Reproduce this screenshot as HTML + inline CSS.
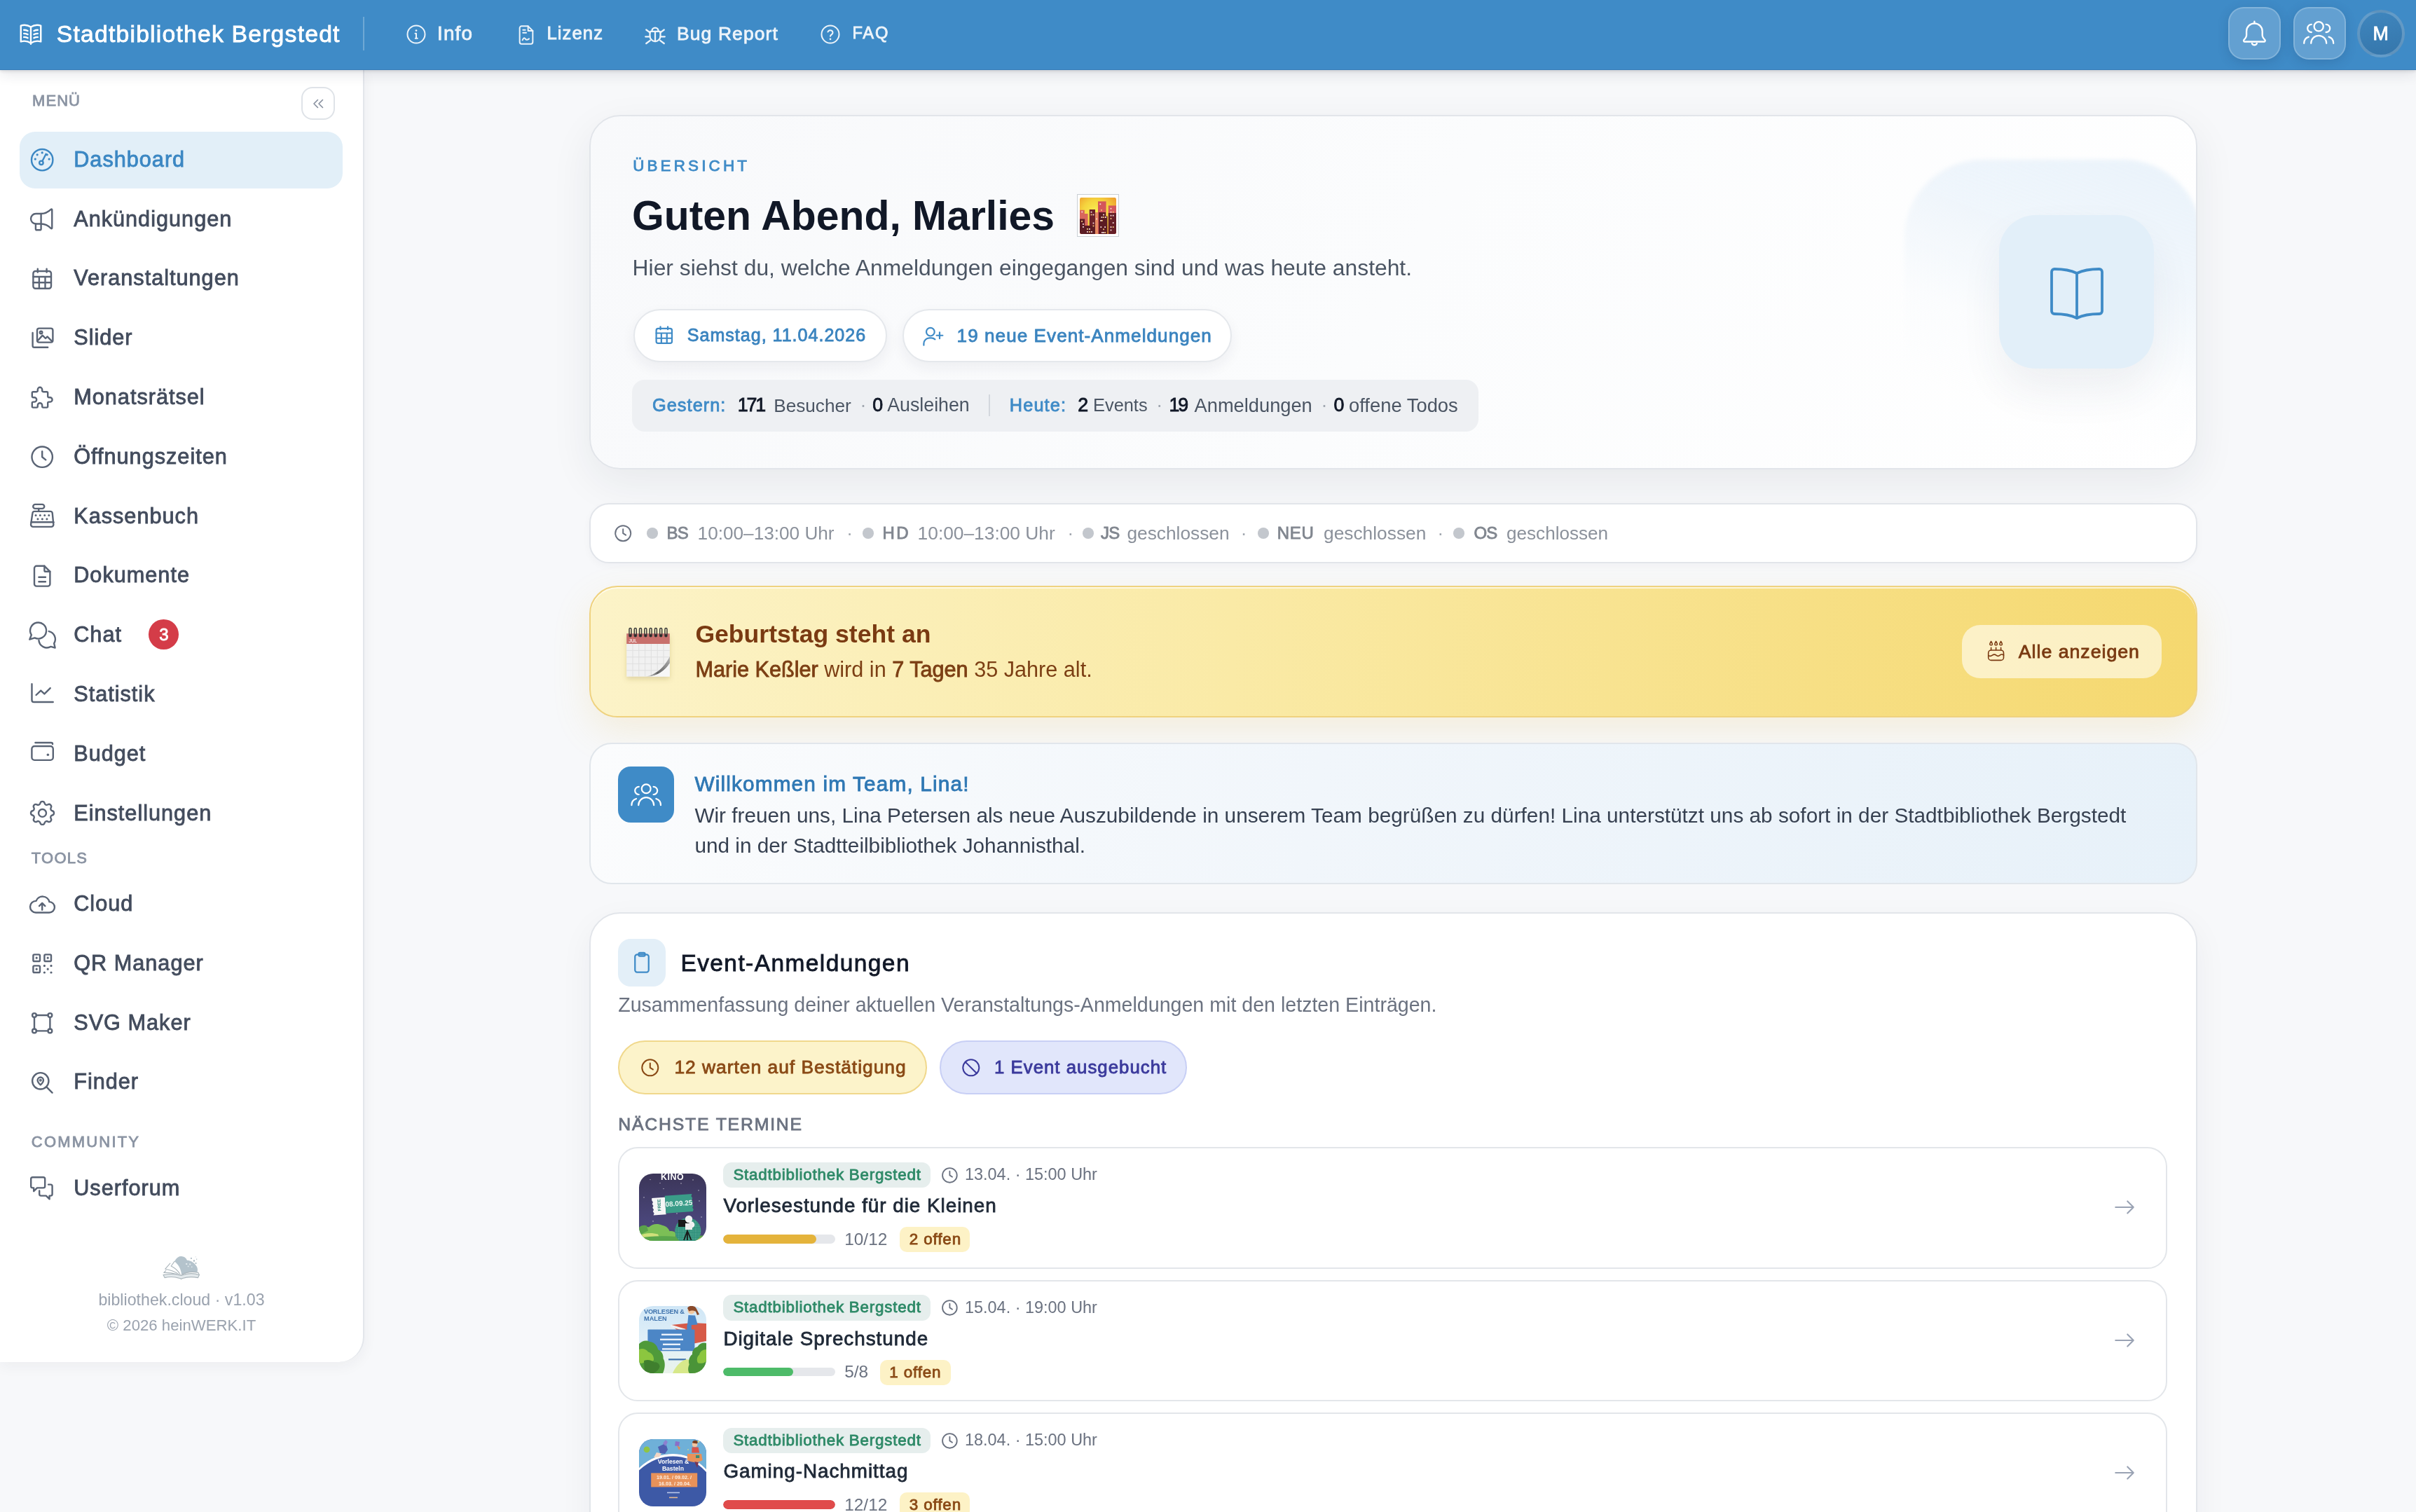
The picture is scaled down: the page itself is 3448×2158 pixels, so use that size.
<!DOCTYPE html>
<html lang="de">
<head>
<meta charset="utf-8">
<title>Dashboard</title>
<style>
html,body{margin:0;padding:0;background:#f7f8fa;overflow:hidden}
#root{zoom:2;width:1724px;height:1079px;position:relative;overflow:hidden;background:#f7f8fa;will-change:transform;font-family:"Liberation Sans",sans-serif}
.t{position:absolute;white-space:nowrap;line-height:1;z-index:6}
svg{position:absolute;overflow:visible;z-index:6}
.ic{fill:none;stroke:currentColor;stroke-linecap:round;stroke-linejoin:round}
.L{position:absolute;box-sizing:border-box}
</style>
</head>
<body>
<div id="root">
<div style="position:absolute;left:0.00px;top:0.00px;width:1724.00px;height:50.00px;background:#3f8bc7;box-shadow:inset 0 -0.5px 0 rgba(20,50,90,.14),0 1px 2px rgba(0,0,0,.10),0 3px 9px rgba(30,40,60,.11);z-index:5"></div>
<svg style="left:12.60px;top:14.70px;width:19.00px;height:19.00px;color:#fff" viewBox="0 0 24 24" class="ic" stroke-width="1.5"><path d="M3 4.8c3-.9 6-.7 9 1.2 3-1.9 6-2.1 9-1.2v14.4c-3-.9-6-.7-9 1.3-3-2-6-2.2-9-1.3z"/><path d="M12 6v15.3"/><path d="M5.8 8.7c1.3 0 2.4.3 3.4.8M5.8 11.9c1.3 0 2.4.3 3.4.8M5.8 15.1c1.3 0 2.4.3 3.4.8M14.8 9.5c1-.5 2.1-.8 3.4-.8M14.8 12.7c1-.5 2.1-.8 3.4-.8M14.8 15.9c1-.5 2.1-.8 3.4-.8"/></svg>
<span class="t" style="left:40.40px;top:16.15px;font-size:16.89px;color:#ffffff;-webkit-text-stroke-width:0.42px;letter-spacing:0.589px;">Stadtbibliothek Bergstedt</span>
<div style="position:absolute;left:259.00px;top:12.00px;width:1.00px;height:24.00px;background:rgba(255,255,255,.25);z-index:6"></div>
<svg style="left:289.30px;top:17.20px;width:15.00px;height:15.00px;color:#edf4fa" viewBox="0 0 24 24" class="ic" stroke-width="1.6"><circle cx="12" cy="12" r="10"/><path d="M12 16.5v-5.5h-1.2M11 16.5h2.4"/><path d="M12 7.6v.01" stroke-width="2.2"/></svg>
<span class="t" style="left:312.00px;top:17.14px;font-size:13.92px;color:#edf4fa;-webkit-text-stroke-width:0.42px;letter-spacing:0.583px;">Info</span>
<svg style="left:367.30px;top:16.40px;width:16.00px;height:17.00px;color:#edf4fa" viewBox="0 0 24 24" class="ic" stroke-width="1.5"><path d="M14 2.5H7a2 2 0 0 0-2 2v15a2 2 0 0 0 2 2h10a2 2 0 0 0 2-2V7.5z"/><path d="M14 2.5v5h5"/><path d="M8.5 6.5h2.5M8.5 9.5h3.5M8 17.5c1-2.5 2-3 3-1.5 1 1.5 2 1.5 4 0"/></svg>
<span class="t" style="left:390.20px;top:17.70px;font-size:12.81px;color:#edf4fa;-webkit-text-stroke-width:0.42px;letter-spacing:0.557px;">Lizenz</span>
<svg style="left:458.60px;top:16.00px;width:18.00px;height:18.00px;color:#edf4fa" viewBox="0 0 24 24" class="ic" stroke-width="1.5"><path d="M9 8.5V8a3 3 0 0 1 6 0v.5"/><path d="M8 8.5h8a1 1 0 0 1 1 1v3.5a5 5 0 0 1-10 0V9.5a1 1 0 0 1 1-1z"/><path d="M12 9v9M2.8 13.5H7M17 13.5h4.2M3.5 7l3.7 2.8M20.5 7l-3.7 2.8M3.5 20l3.7-2.8M20.5 20l-3.7-2.8"/></svg>
<span class="t" style="left:483.00px;top:17.48px;font-size:13.23px;color:#edf4fa;-webkit-text-stroke-width:0.42px;letter-spacing:0.560px;">Bug Report</span>
<svg style="left:585.20px;top:17.20px;width:15.00px;height:15.00px;color:#edf4fa" viewBox="0 0 24 24" class="ic" stroke-width="1.6"><circle cx="12" cy="12" r="10"/><path d="M9.2 9.2a2.9 2.9 0 0 1 5.6 1c0 1.9-2.8 2.3-2.8 4"/><path d="M12 17.4v.01" stroke-width="2.2"/></svg>
<span class="t" style="left:608.20px;top:18.17px;font-size:11.86px;color:#edf4fa;-webkit-text-stroke-width:0.42px;letter-spacing:0.893px;">FAQ</span>
<div style="position:absolute;left:1590.10px;top:5.10px;width:37.60px;height:37.60px;box-sizing:border-box;border-radius:11px;background:rgba(255,255,255,.19);border:1px solid rgba(255,255,255,.2);box-shadow:0 2px 8px rgba(20,50,90,.18);z-index:6"></div>
<div style="position:absolute;left:1636.30px;top:5.10px;width:37.60px;height:37.60px;box-sizing:border-box;border-radius:11px;background:rgba(255,255,255,.19);border:1px solid rgba(255,255,255,.2);box-shadow:0 2px 8px rgba(20,50,90,.18);z-index:6"></div>
<svg style="left:1597.10px;top:11.90px;width:23.40px;height:23.40px;color:#fff" viewBox="0 0 24 24" class="ic" stroke-width="1.2"><path d="M12 3.4v1.4"/><path d="M12 4.8a5.8 5.8 0 0 0-5.8 5.8v2.9c0 1.3-.9 2.4-1.9 3.4a.8.8 0 0 0 .5 1.3h14.4a.8.8 0 0 0 .5-1.3c-1-1-1.9-2.1-1.9-3.4v-2.9A5.8 5.8 0 0 0 12 4.8z"/><path d="M10.2 19.5a2 2 0 0 0 3.6 0"/></svg>
<svg style="left:1643.70px;top:14.90px;width:22.20px;height:16.00px;color:#fff" viewBox="0 0 22.2 16" class="ic" stroke-width="1.15"><circle cx="11.1" cy="3.9" r="3.3"/><path d="M5.6 15.9a5.5 5.5 0 0 1 11 0"/><path d="M5.9 2.4A2.8 2.8 0 0 0 5.9 8M16.3 2.4A2.8 2.8 0 0 1 16.3 8"/><path d="M0.6 15.9a4.8 4.8 0 0 1 3.3-4.6M21.6 15.9a4.8 4.8 0 0 0-3.3-4.6"/></svg>
<div style="position:absolute;left:1682.20px;top:7.20px;width:33.60px;height:33.60px;box-sizing:border-box;border-radius:50%;border:2px solid rgba(255,255,255,.2);background:linear-gradient(170deg,#3f86be,#3576ab);z-index:6"></div>
<span class="t" style="left:1693.30px;top:17.30px;font-size:13.40px;color:#ffffff;-webkit-text-stroke-width:0.42px;">M</span>
<div style="position:absolute;left:0.00px;top:50.00px;width:260.20px;height:922.00px;box-sizing:border-box;background:#fff;border-right:1px solid #e3e6eb;border-bottom-right-radius:18px;box-shadow:0 3px 10px rgba(30,40,60,.05);z-index:2"></div>
<span class="t" style="left:23.00px;top:66.50px;font-size:11.00px;color:#8b94a3;-webkit-text-stroke-width:0.42px;letter-spacing:0.535px;">MENÜ</span>
<div style="position:absolute;left:215.20px;top:62.20px;width:23.60px;height:23.40px;box-sizing:border-box;border:1px solid #dfe3e8;border-radius:8px;background:#fff;z-index:6"></div>
<svg style="left:221.00px;top:67.90px;width:12.00px;height:12.00px;color:#858e9d" viewBox="0 0 24 24" class="ic" stroke-width="1.6"><path d="M11.5 17.5l-5.5-5.5 5.5-5.5M18.5 17.5l-5.5-5.5 5.5-5.5"/></svg>
<div style="position:absolute;left:13.90px;top:94.00px;width:230.80px;height:40.40px;border-radius:11px;background:#e2eff8;z-index:6"></div>
<svg style="left:20.30px;top:104.50px;width:19.20px;height:19.20px;color:#3b87c3" viewBox="0 0 24 24" class="ic" stroke-width="1.5"><circle cx="12" cy="12" r="9.5"/><circle cx="11.2" cy="14.6" r="1.7"/><path d="M12.1 13.1l3.3-6.4"/><path d="M12 5.6h.01M7.6 7.4h.01M16.4 7.4h.01M5.8 11.3h.01M18.2 11.3h.01" stroke-width="2"/></svg>
<span class="t" style="left:52.60px;top:106.42px;font-size:15.35px;color:#3b87c3;-webkit-text-stroke-width:0.42px;letter-spacing:0.492px;">Dashboard</span>
<svg style="left:20.30px;top:146.90px;width:19.20px;height:19.20px;color:#5a6475" viewBox="0 0 24 24" class="ic" stroke-width="1.5"><path d="M11 6.9H6.4A4.5 4.5 0 0 0 6.4 15.9H11C14.5 15.9 17.5 17.5 20 20.1a.5.5 0 0 0 .8-.4V3.3a.5.5 0 0 0-.8-.4C17.5 5.3 14.5 6.9 11 6.9z"/><path d="M11 6.9V20.4a1 1 0 0 1-1 1H7.2a1 1 0 0 1-1-1V15.9"/></svg>
<span class="t" style="left:52.60px;top:148.82px;font-size:15.35px;color:#434c5d;-webkit-text-stroke-width:0.42px;letter-spacing:0.492px;">Ankündigungen</span>
<svg style="left:20.30px;top:189.30px;width:19.20px;height:19.20px;color:#5a6475" viewBox="0 0 24 24" class="ic" stroke-width="1.5"><rect x="4" y="5" width="16" height="15.5" rx="2"/><path d="M8 3v3M16 3v3M4 10h16M4 15.2h16M9.3 10v10.5M14.7 10v10.5"/></svg>
<span class="t" style="left:52.60px;top:191.22px;font-size:15.35px;color:#434c5d;-webkit-text-stroke-width:0.42px;letter-spacing:0.492px;">Veranstaltungen</span>
<svg style="left:20.30px;top:231.70px;width:19.20px;height:19.20px;color:#5a6475" viewBox="0 0 24 24" class="ic" stroke-width="1.5"><rect x="7.5" y="3.5" width="14" height="12.5" rx="1.8"/><circle cx="11" cy="7.2" r="1.1"/><path d="M8.5 14l3.8-4.2 2.7 2.7 1.6-1.6 4 4"/><path d="M3.5 7.5v11.5a1.5 1.5 0 0 0 1.5 1.5h12"/></svg>
<span class="t" style="left:52.60px;top:233.62px;font-size:15.35px;color:#434c5d;-webkit-text-stroke-width:0.42px;letter-spacing:0.492px;">Slider</span>
<svg style="left:20.30px;top:274.10px;width:19.20px;height:19.20px;color:#5a6475" viewBox="0 0 24 24" class="ic" stroke-width="1.5"><path d="M4 7h3a1 1 0 0 0 1-1v-1a2 2 0 0 1 4 0v1a1 1 0 0 0 1 1h3a1 1 0 0 1 1 1v3a1 1 0 0 0 1 1h1a2 2 0 0 1 0 4h-1a1 1 0 0 0-1 1v3a1 1 0 0 1-1 1h-3a1 1 0 0 1-1-1v-1a2 2 0 0 0-4 0v1a1 1 0 0 1-1 1h-3a1 1 0 0 1-1-1v-3a1 1 0 0 1 1-1h1a2 2 0 0 0 0-4h-1a1 1 0 0 1-1-1v-3a1 1 0 0 1 1-1"/></svg>
<span class="t" style="left:52.60px;top:276.02px;font-size:15.35px;color:#434c5d;-webkit-text-stroke-width:0.42px;letter-spacing:0.492px;">Monatsrätsel</span>
<svg style="left:20.30px;top:316.50px;width:19.20px;height:19.20px;color:#5a6475" viewBox="0 0 24 24" class="ic" stroke-width="1.5"><circle cx="12" cy="12" r="9.2"/><path d="M12 7v5l3.2 2.6"/></svg>
<span class="t" style="left:52.60px;top:318.43px;font-size:15.35px;color:#434c5d;-webkit-text-stroke-width:0.42px;letter-spacing:0.492px;">Öffnungszeiten</span>
<svg style="left:20.30px;top:358.90px;width:19.20px;height:19.20px;color:#5a6475" viewBox="0 0 24 24" class="ic" stroke-width="1.5"><rect x="3.9" y="1.2" width="10" height="3.7" rx="1.85"/><path d="M8.9 4.9v2.5"/><path d="M5.2 7.4h14.1a1.8 1.8 0 0 1 1.8 1.6l1 10.1a2 2 0 0 1-2 2.1H3.9a2 2 0 0 1-2-2.1l1.5-10.1a1.8 1.8 0 0 1 1.8-1.6z"/><path d="M2.3 17h19.9"/><path d="M6.3 11h.01M10.2 11h.01M14.2 11h.01M18 11h.01M8.1 14.3h.01M12.1 14.3h.01M16.2 14.3h.01" stroke-width="1.9"/></svg>
<span class="t" style="left:52.60px;top:360.82px;font-size:15.35px;color:#434c5d;-webkit-text-stroke-width:0.42px;letter-spacing:0.492px;">Kassenbuch</span>
<svg style="left:20.30px;top:401.30px;width:19.20px;height:19.20px;color:#5a6475" viewBox="0 0 24 24" class="ic" stroke-width="1.5"><path d="M14 3v4a1 1 0 0 0 1 1h4"/><path d="M17 21H7a2 2 0 0 1-2-2V5a2 2 0 0 1 2-2h7l5 5v11a2 2 0 0 1-2 2z"/><path d="M9 13h6M9 17h6"/></svg>
<span class="t" style="left:52.60px;top:403.22px;font-size:15.35px;color:#434c5d;-webkit-text-stroke-width:0.42px;letter-spacing:0.492px;">Dokumente</span>
<svg style="left:20.30px;top:443.70px;width:19.20px;height:19.20px;color:#5a6475" viewBox="0 0 24 24" class="ic" stroke-width="1.5"><path d="M2.4 12A7.2 7.2 0 1 1 5.3 14.6L0.8 16z"/><path d="M18 8.8A7.2 7.2 0 0 1 22.6 19.6L23.5 23.5 19.8 22.4A7.2 7.2 0 0 1 9 16.8"/></svg>
<span class="t" style="left:52.60px;top:445.62px;font-size:15.35px;color:#434c5d;-webkit-text-stroke-width:0.42px;letter-spacing:0.492px;">Chat</span>
<svg style="left:20.30px;top:486.10px;width:19.20px;height:19.20px;color:#5a6475" viewBox="0 0 24 24" class="ic" stroke-width="1.5"><path d="M2.8 2.7V17a1.8 1.8 0 0 0 1.8 1.8H21.7"/><path d="M6.6 12.5l4.2-4 3.2 3 5.2-5.2"/></svg>
<span class="t" style="left:52.60px;top:488.02px;font-size:15.35px;color:#434c5d;-webkit-text-stroke-width:0.42px;letter-spacing:0.492px;">Statistik</span>
<svg style="left:20.30px;top:528.50px;width:19.20px;height:19.20px;color:#5a6475" viewBox="0 0 24 24" class="ic" stroke-width="1.5"><path d="M5.9 1.9H20a1.3 1.3 0 0 1 1.3 1.3"/><rect x="2.75" y="5" width="19" height="12.4" rx="2.4"/><path d="M17.1 12.6h.01" stroke-width="2.2"/></svg>
<span class="t" style="left:52.60px;top:530.43px;font-size:15.35px;color:#434c5d;-webkit-text-stroke-width:0.42px;letter-spacing:0.492px;">Budget</span>
<svg style="left:20.30px;top:570.90px;width:19.20px;height:19.20px;color:#5a6475" viewBox="0 0 24 24" class="ic" stroke-width="1.5"><g transform="translate(12.2 11.5) scale(1.14) translate(-12 -12)" stroke-width="1.32"><path d="M10.3 4.3c.4-1.8 3-1.8 3.4 0a1.7 1.7 0 0 0 2.6 1.1c1.5-.9 3.3.8 2.4 2.4a1.7 1.7 0 0 0 1 2.5c1.8.4 1.8 3 0 3.4a1.7 1.7 0 0 0-1 2.6c.9 1.5-.8 3.3-2.4 2.4a1.7 1.7 0 0 0-2.6 1c-.4 1.8-3 1.8-3.4 0a1.7 1.7 0 0 0-2.6-1c-1.5.9-3.3-.8-2.4-2.4a1.7 1.7 0 0 0-1-2.6c-1.8-.4-1.8-3 0-3.4a1.7 1.7 0 0 0 1-2.5c-.9-1.5.8-3.3 2.4-2.4 1 .6 2.3.1 2.6-1.1z"/><circle cx="12" cy="12" r="3"/></g></svg>
<span class="t" style="left:52.60px;top:572.83px;font-size:15.35px;color:#434c5d;-webkit-text-stroke-width:0.42px;letter-spacing:0.492px;">Einstellungen</span>
<div style="position:absolute;left:106.10px;top:442.05px;width:21.30px;height:21.30px;border-radius:50%;background:#d43c48;z-index:6"></div>
<span class="t" style="left:113.60px;top:446.90px;font-size:12.00px;color:#fff;-webkit-text-stroke-width:0.42px;">3</span>
<span class="t" style="left:22.40px;top:607.10px;font-size:11.00px;color:#8b94a3;-webkit-text-stroke-width:0.42px;letter-spacing:0.607px;">TOOLS</span>
<svg style="left:20.30px;top:635.60px;width:19.20px;height:19.20px;color:#5a6475" viewBox="0 0 24 24" class="ic" stroke-width="1.5"><path d="M6.3 19.7A5.2 5.2 0 0 1 6.6 9.3A6.2 6.2 0 0 1 18.4 10.1A4.8 4.8 0 0 1 18.2 19.7Z"/><path d="M12 17.3V11.3M9.4 13.8l2.6-2.6 2.6 2.6"/></svg>
<span class="t" style="left:52.60px;top:637.53px;font-size:15.35px;color:#434c5d;-webkit-text-stroke-width:0.42px;letter-spacing:0.492px;">Cloud</span>
<svg style="left:20.30px;top:678.00px;width:19.20px;height:19.20px;color:#5a6475" viewBox="0 0 24 24" class="ic" stroke-width="1.5"><rect x="4" y="4" width="6" height="6" rx="1"/><rect x="4" y="14" width="6" height="6" rx="1"/><rect x="14" y="4" width="6" height="6" rx="1"/><path d="M7 17h.01M7 7h.01M17 7h.01M14 14h.01M17 17h.01M20 14h.01M14 20h.01M20 20h.01" stroke-width="2"/></svg>
<span class="t" style="left:52.60px;top:679.93px;font-size:15.35px;color:#434c5d;-webkit-text-stroke-width:0.42px;letter-spacing:0.492px;">QR Manager</span>
<svg style="left:20.30px;top:720.40px;width:19.20px;height:19.20px;color:#5a6475" viewBox="0 0 24 24" class="ic" stroke-width="1.5"><circle cx="5" cy="5" r="1.8"/><circle cx="19" cy="5" r="1.8"/><circle cx="5" cy="19" r="1.8"/><circle cx="19" cy="19" r="1.8"/><path d="M5 6.8v10.4M19 6.8v10.4M6.8 5h10.4M6.8 19h10.4"/></svg>
<span class="t" style="left:52.60px;top:722.33px;font-size:15.35px;color:#434c5d;-webkit-text-stroke-width:0.42px;letter-spacing:0.492px;">SVG Maker</span>
<svg style="left:20.30px;top:762.80px;width:19.20px;height:19.20px;color:#5a6475" viewBox="0 0 24 24" class="ic" stroke-width="1.5"><circle cx="10.5" cy="10.5" r="7.3"/><path d="M21 21l-5.3-5.3"/><path d="M10.5 14s-2.6-2.4-2.6-4.2a2.6 2.6 0 0 1 5.2 0c0 1.8-2.6 4.2-2.6 4.2z"/><circle cx="10.5" cy="9.8" r=".5"/></svg>
<span class="t" style="left:52.60px;top:764.73px;font-size:15.35px;color:#434c5d;-webkit-text-stroke-width:0.42px;letter-spacing:0.492px;">Finder</span>
<span class="t" style="left:22.40px;top:809.30px;font-size:11.00px;color:#8b94a3;-webkit-text-stroke-width:0.42px;letter-spacing:1.098px;">COMMUNITY</span>
<svg style="left:20.30px;top:838.40px;width:19.20px;height:19.20px;color:#5a6475" viewBox="0 0 24 24" class="ic" stroke-width="1.5"><path d="M14.5 3.5v6.5a1.5 1.5 0 0 1-1.5 1.5H7.5l-3 3v-3h-1A1.5 1.5 0 0 1 2 10V3.5A1.5 1.5 0 0 1 3.5 2H13a1.5 1.5 0 0 1 1.5 1.5z"/><path d="M17.5 8.5h2A1.5 1.5 0 0 1 21 10v7a1.5 1.5 0 0 1-1.5 1.5h-1v3l-3-3H11a1.5 1.5 0 0 1-1.5-1.5v-3"/></svg>
<span class="t" style="left:52.60px;top:840.33px;font-size:15.35px;color:#434c5d;-webkit-text-stroke-width:0.42px;letter-spacing:0.492px;">Userforum</span>
<svg style="left:100px;top:885px;width:60px;height:35px" viewBox="0 0 60 35"><path d="M24.6 15.2C25.5 12.8 27.3 11.5 29.3 11.5C31.3 11.5 32.7 12.6 33.5 14.4C36.8 14.6 39 16.5 40.5 19C41.2 20.5 41.1 22 40.6 23C37 22.4 33 23 29.6 24.7C29 20.5 27.3 17.2 24.6 15.2z" fill="#b4c3cc"/><g fill="#e4ebef"><rect x="32.6" y="16.5" width="1" height="1"/><rect x="35.1" y="16.7" width="1" height="1"/><rect x="33.9" y="18.3" width=".8" height=".8"/><rect x="36.5" y="18.8" width=".7" height=".7"/></g><g fill="#a9b8c1"><rect x="36" y="12.5" width=".9" height=".9"/><rect x="37.9" y="14.2" width="1.1" height="1.1"/><rect x="39.3" y="16" width=".9" height=".9"/><rect x="40" y="13.3" width=".6" height=".6"/><rect x="39.3" y="11.7" width=".5" height=".5" opacity=".6"/></g><g fill="none" stroke="#aab5bb" stroke-width=".55" stroke-linejoin="round" stroke-linecap="round"><path d="M22.1 18.5L24.6 15.1M22.1 18.5C25 20 27.3 22 28.6 24.6"/><path d="M17.9 20.6L21.4 16.6M17.9 20.6C21.5 21.2 24.8 22.4 27.3 24.2"/><path d="M16.9 23.2L18.4 21.7M16.9 23.2C20 23.1 23.2 23.5 26.1 24.3"/><path d="M29.6 24.7C32.5 23 37 22.2 41.5 23.2L42.2 24.8"/></g><path d="M16.5 24.8C21 24 26 24.2 29.3 25.3C32.5 24 37.5 23.2 42.2 24.8L41.3 26.8C37 26 33 26.3 30.3 27.3L29.3 27.8L28.4 27.3C25.5 26.3 21 26 17.5 26.8z" fill="#e3e9ec" stroke="#aab5bb" stroke-width=".55" stroke-linejoin="round"/></svg>
<span class="t" style="left:0;width:259px;text-align:center;top:922.23px;font-size:11.6px;color:#9aa2ae">bibliothek.cloud · v1.03</span>
<span class="t" style="left:0;width:259px;text-align:center;top:940.28px;font-size:11.1px;color:#9aa2ae">© 2026 heinWERK.IT</span>
<div class="L" style="left:420.4px;top:82px;width:1147.4px;height:253px;border:1px solid #e2e5ea;border-radius:22px;background:linear-gradient(120deg,#f8f9fb 0%,#fbfcfd 50%,#ffffff 100%);box-shadow:0 10px 30px rgba(30,40,60,.07);overflow:hidden;z-index:3">
  <div style="position:absolute;left:937.8px;top:30.8px;width:212px;height:215px;border-radius:56px;background:linear-gradient(200deg,rgba(221,235,248,.64) 0%,rgba(226,238,249,.5) 32%,rgba(240,246,252,.16) 58%,rgba(255,255,255,0) 78%);filter:blur(1.5px)"></div>
</div>
<span class="t" style="left:451.60px;top:113.00px;font-size:11.20px;color:#3f8bc7;-webkit-text-stroke-width:0.42px;letter-spacing:2.083px;">ÜBERSICHT</span>
<span class="t" style="left:451.00px;top:139.48px;font-size:29.44px;color:#111827;font-weight:700;">Guten Abend, Marlies</span>
<div class="L" style="left:768.3px;top:138.7px;width:30.2px;height:30.2px;border:.5px solid #c9cfd4;background:#fff;overflow:hidden;z-index:6">
<svg style="left:1.6px;top:1.6px;width:26px;height:26px" viewBox="0 0 26 26"><defs><radialGradient id="sk" cx=".45" cy=".45" r=".7"><stop offset="0" stop-color="#f8f256"/><stop offset=".55" stop-color="#f5d43e"/><stop offset="1" stop-color="#ee9a2c"/></radialGradient><clipPath id="ec"><rect width="26" height="26" rx="1.2"/></clipPath></defs><g clip-path="url(#ec)"><rect width="26" height="26" fill="url(#sk)"/><path d="M0 8.9h3.4v2.6h2.4V26H0z" fill="#d9675c"/><rect x="11" y="10.5" width="2.2" height="15.5" fill="#e58b62"/><rect x="13" y="2.7" width="5.8" height="23.3" fill="#d4565a"/><rect x="20.4" y="5.7" width="5.6" height="20.3" fill="#d4585c"/><rect x="6.9" y="8.5" width="4.1" height="17.5" fill="#6a2129"/><path d="M0 15.3h3.6V20h3.4v6H0z" fill="#5c1c24"/><rect x="3.6" y="20" width="7.3" height="6" fill="#5a1b23"/><path d="M13.5 10.5h5v2.7h1.2V26h-6.2z" fill="#5b1b23"/><rect x="20.4" y="11" width="5.6" height="15" fill="#661f27"/><rect x="1.2" y="9.8" width=".9" height=".9" fill="#f7dede"/><rect x="1.1" y="16.5" width=".9" height=".9" fill="#f3c97a"/><rect x="2.0" y="18.5" width=".9" height=".9" fill="#f7dede"/><rect x="2.0" y="20.5" width=".9" height=".9" fill="#f7dede"/><rect x="5.0" y="22.0" width=".9" height=".9" fill="#f3c97a"/><rect x="6.5" y="22.0" width=".9" height=".9" fill="#f7dede"/><rect x="5.0" y="24.0" width=".9" height=".9" fill="#f7dede"/><rect x="6.5" y="24.0" width=".9" height=".9" fill="#f3c97a"/><rect x="8.0" y="24.0" width=".9" height=".9" fill="#f7dede"/><rect x="7.8" y="9.9" width=".9" height=".9" fill="#f7dede"/><rect x="7.8" y="11.8" width=".9" height=".9" fill="#f3c97a"/><rect x="9.3" y="11.8" width=".9" height=".9" fill="#f7dede"/><rect x="9.3" y="17.8" width=".9" height=".9" fill="#f7dede"/><rect x="9.3" y="19.8" width=".9" height=".9" fill="#f3c97a"/><rect x="11.6" y="14.8" width=".9" height=".9" fill="#f7dede"/><rect x="14.2" y="4.2" width=".9" height=".9" fill="#f7dede"/><rect x="15.0" y="8.5" width=".9" height=".9" fill="#f3c97a"/><rect x="16.6" y="11.8" width=".9" height=".9" fill="#f7dede"/><rect x="15.3" y="13.6" width=".9" height=".9" fill="#f7dede"/><rect x="16.6" y="13.6" width=".9" height=".9" fill="#f3c97a"/><rect x="18.0" y="13.6" width=".9" height=".9" fill="#f7dede"/><rect x="14.6" y="16.0" width=".9" height=".9" fill="#f7dede"/><rect x="15.5" y="16.0" width=".9" height=".9" fill="#f3c97a"/><rect x="14.7" y="20.6" width=".9" height=".9" fill="#f7dede"/><rect x="17.6" y="20.6" width=".9" height=".9" fill="#f7dede"/><rect x="16.6" y="22.2" width=".9" height=".9" fill="#f3c97a"/><rect x="15.5" y="24.5" width=".9" height=".9" fill="#f7dede"/><rect x="16.6" y="24.5" width=".9" height=".9" fill="#f7dede"/><rect x="17.7" y="24.5" width=".9" height=".9" fill="#f3c97a"/><rect x="21.8" y="7.4" width=".9" height=".9" fill="#f7dede"/><rect x="21.8" y="9.9" width=".9" height=".9" fill="#f7dede"/><rect x="23.4" y="9.9" width=".9" height=".9" fill="#f3c97a"/><rect x="21.8" y="12.4" width=".9" height=".9" fill="#f7dede"/><rect x="23.4" y="12.4" width=".9" height=".9" fill="#f7dede"/><rect x="21.8" y="14.6" width=".9" height=".9" fill="#f3c97a"/><rect x="23.4" y="17.6" width=".9" height=".9" fill="#f7dede"/><rect x="21.8" y="20.6" width=".9" height=".9" fill="#f7dede"/><rect x="23.4" y="20.6" width=".9" height=".9" fill="#f3c97a"/><rect x="21.8" y="22.8" width=".9" height=".9" fill="#f7dede"/></g></svg></div>
<span class="t" style="left:451.30px;top:183.74px;font-size:15.91px;color:#4b5563;">Hier siehst du, welche Anmeldungen eingegangen sind und was heute ansteht.</span>
<div style="position:absolute;left:451.90px;top:220.30px;width:181.10px;height:38.20px;box-sizing:border-box;border:1px solid #e5e8ec;border-radius:19px;background:#fff;z-index:6;box-shadow:0 4px 10px rgba(30,40,60,.06);"></div>
<svg style="left:466.10px;top:231.60px;width:15.80px;height:15.80px;color:#3f8bc7" viewBox="0 0 24 24" class="ic" stroke-width="1.7"><rect x="3.5" y="4.5" width="17" height="16" rx="2"/><path d="M8 2.5v3M16 2.5v3M3.5 9.5h17M3.5 15h17M9 9.5v11M15 9.5v11"/></svg>
<span class="t" style="left:490.40px;top:233.13px;font-size:12.54px;color:#3b84bf;-webkit-text-stroke-width:0.42px;letter-spacing:0.495px;">Samstag, 11.04.2026</span>
<div style="position:absolute;left:644.10px;top:220.30px;width:235.00px;height:38.20px;box-sizing:border-box;border:1px solid #e5e8ec;border-radius:19px;background:#fff;z-index:6;box-shadow:0 4px 10px rgba(30,40,60,.06);"></div>
<svg style="left:656.80px;top:231.00px;width:17.50px;height:17.50px;color:#3f8bc7" viewBox="0 0 24 24" class="ic" stroke-width="1.5"><circle cx="9.5" cy="8" r="4"/><path d="M3 21v-1.5A5.5 5.5 0 0 1 8.5 14h2a5.5 5.5 0 0 1 3.5 1.3"/><path d="M18.5 8.5v6M15.5 11.5h6"/></svg>
<span class="t" style="left:682.80px;top:232.88px;font-size:13.04px;color:#3b84bf;-webkit-text-stroke-width:0.42px;letter-spacing:0.530px;">19 neue Event-Anmeldungen</span>
<div style="position:absolute;left:451.00px;top:271.00px;width:604.00px;height:36.90px;border-radius:9px;background:#eef0f3;z-index:6"></div>
<span class="t" style="left:465.50px;top:282.97px;font-size:12.66px;color:#3f8bc7;-webkit-text-stroke-width:0.42px;letter-spacing:0.522px;">Gestern:</span>
<span class="t" style="left:526.40px;top:282.60px;font-size:13.40px;color:#111827;-webkit-text-stroke-width:0.42px;letter-spacing:-1.089px;">171</span>
<span class="t" style="left:552.10px;top:282.76px;font-size:13.09px;color:#4b5563;">Besucher</span>
<span class="t" style="left:613.80px;top:282.60px;font-size:13.40px;color:#a1a7b0;">·</span>
<span class="t" style="left:622.60px;top:282.60px;font-size:13.40px;color:#111827;-webkit-text-stroke-width:0.42px;">0</span>
<span class="t" style="left:633.10px;top:282.60px;font-size:13.39px;color:#4b5563;">Ausleihen</span>
<div style="position:absolute;left:705.60px;top:281.50px;width:1.00px;height:15.50px;background:#d3d7dd;z-index:6"></div>
<span class="t" style="left:720.40px;top:282.97px;font-size:12.66px;color:#3f8bc7;-webkit-text-stroke-width:0.42px;letter-spacing:0.561px;">Heute:</span>
<span class="t" style="left:769.10px;top:282.60px;font-size:13.40px;color:#111827;-webkit-text-stroke-width:0.42px;">2</span>
<span class="t" style="left:780.00px;top:282.95px;font-size:12.70px;color:#4b5563;">Events</span>
<span class="t" style="left:825.10px;top:282.60px;font-size:13.40px;color:#a1a7b0;">·</span>
<span class="t" style="left:834.30px;top:282.60px;font-size:13.40px;color:#111827;-webkit-text-stroke-width:0.42px;letter-spacing:-1.174px;">19</span>
<span class="t" style="left:852.30px;top:282.48px;font-size:13.63px;color:#4b5563;">Anmeldungen</span>
<span class="t" style="left:942.70px;top:282.60px;font-size:13.40px;color:#a1a7b0;">·</span>
<span class="t" style="left:951.70px;top:282.60px;font-size:13.40px;color:#111827;-webkit-text-stroke-width:0.42px;">0</span>
<span class="t" style="left:962.50px;top:282.45px;font-size:13.69px;color:#4b5563;">offene Todos</span>
<div style="position:absolute;left:1426.70px;top:153.50px;width:110.30px;height:109.70px;border-radius:26px;background:#e2eff9;box-shadow:0 16px 30px rgba(40,60,90,.07);z-index:6"></div>
<svg style="left:1457.80px;top:185.10px;width:48.00px;height:48.00px;color:#3f8bc7" viewBox="0 0 24 24" class="ic" stroke-width="0.95"><path d="M12 5C10 4 7 3.5 4 3.5a1 1 0 0 0-1 1V18.5a1 1 0 0 0 1 1C7 19.5 10 20 12 21C14 20 17 19.5 20 19.5a1 1 0 0 0 1-1V4.5a1 1 0 0 0-1-1C17 3.5 14 4 12 5z"/><path d="M12 5V21"/></svg>
<div style="position:absolute;left:420.40px;top:359.00px;width:1147.40px;height:43.00px;box-sizing:border-box;border:1px solid #e2e5ea;border-radius:14px;background:#fff;box-shadow:0 2px 6px rgba(30,40,60,.03);z-index:3"></div>
<svg style="left:438.20px;top:373.90px;width:13.20px;height:13.20px;color:#6b7280" viewBox="0 0 24 24" class="ic" stroke-width="1.8"><circle cx="12" cy="12" r="10"/><path d="M12 6.5v5.5l3.5 2.2"/></svg>
<div style="position:absolute;left:461.50px;top:376.40px;width:7.90px;height:7.90px;border-radius:50%;background:#c3c7cd;z-index:6"></div>
<span class="t" style="left:475.80px;top:374.40px;font-size:12.00px;color:#80868f;-webkit-text-stroke-width:0.42px;letter-spacing:-0.400px;">BS</span>
<span class="t" style="left:497.80px;top:373.86px;font-size:13.09px;color:#8b919b;">10:00–13:00 Uhr</span>
<span class="t" style="left:604.10px;top:373.90px;font-size:13.00px;color:#a0a6ae;">·</span>
<div style="position:absolute;left:615.50px;top:376.40px;width:7.90px;height:7.90px;border-radius:50%;background:#c3c7cd;z-index:6"></div>
<span class="t" style="left:629.70px;top:374.40px;font-size:12.00px;color:#80868f;-webkit-text-stroke-width:0.42px;letter-spacing:1.260px;">HD</span>
<span class="t" style="left:654.80px;top:373.82px;font-size:13.17px;color:#8b919b;">10:00–13:00 Uhr</span>
<span class="t" style="left:761.70px;top:373.90px;font-size:13.00px;color:#a0a6ae;">·</span>
<div style="position:absolute;left:772.70px;top:376.40px;width:7.90px;height:7.90px;border-radius:50%;background:#c3c7cd;z-index:6"></div>
<span class="t" style="left:785.50px;top:374.40px;font-size:12.00px;color:#80868f;-webkit-text-stroke-width:0.42px;letter-spacing:-0.400px;">JS</span>
<span class="t" style="left:804.20px;top:373.83px;font-size:13.15px;color:#8b919b;">geschlossen</span>
<span class="t" style="left:885.40px;top:373.90px;font-size:13.00px;color:#a0a6ae;">·</span>
<div style="position:absolute;left:897.40px;top:376.40px;width:7.90px;height:7.90px;border-radius:50%;background:#c3c7cd;z-index:6"></div>
<span class="t" style="left:911.40px;top:374.40px;font-size:12.00px;color:#80868f;-webkit-text-stroke-width:0.42px;letter-spacing:0.340px;">NEU</span>
<span class="t" style="left:944.50px;top:373.82px;font-size:13.17px;color:#8b919b;">geschlossen</span>
<span class="t" style="left:1025.80px;top:373.90px;font-size:13.00px;color:#a0a6ae;">·</span>
<div style="position:absolute;left:1037.00px;top:376.40px;width:7.90px;height:7.90px;border-radius:50%;background:#c3c7cd;z-index:6"></div>
<span class="t" style="left:1051.70px;top:374.40px;font-size:12.00px;color:#80868f;-webkit-text-stroke-width:0.42px;letter-spacing:-0.400px;">OS</span>
<span class="t" style="left:1075.00px;top:373.87px;font-size:13.06px;color:#8b919b;">geschlossen</span>
<div style="position:absolute;left:420.40px;top:418.00px;width:1147.40px;height:94.00px;box-sizing:border-box;border:1px solid #efd27f;border-radius:20px;background:linear-gradient(90deg,#fcf3c8 0%,#faeaa6 40%,#f5d86f 100%);box-shadow:inset 0 1px 0 rgba(255,255,255,.65),0 10px 26px rgba(230,190,80,.17);z-index:3"></div>
<svg style="left:440px;top:440px;width:40px;height:46px" viewBox="0 0 40 46"><defs><filter id="csh" x="-30%" y="-30%" width="160%" height="170%"><feDropShadow dx="0" dy="1.8" stdDeviation="1.8" flood-color="#7a6420" flood-opacity=".22"/></filter><linearGradient id="curl" x1="0" y1="1" x2="1" y2="0"><stop offset="0" stop-color="#5a5a5a" stop-opacity=".0"/><stop offset=".35" stop-color="#4a4a4a" stop-opacity=".85"/><stop offset="1" stop-color="#8a8a8a" stop-opacity=".6"/></linearGradient></defs><g filter="url(#csh)"><rect x="7.1" y="12.1" width="30.8" height="30.7" fill="#f1f1f1"/><rect x="7.1" y="12.1" width="30.8" height="7.4" fill="#c8706c"/></g><g stroke="#dedede" stroke-width=".45"><path d="M11.50 19.5V42.8"/><path d="M15.90 19.5V42.8"/><path d="M20.30 19.5V42.8"/><path d="M24.70 19.5V42.8"/><path d="M29.10 19.5V42.8"/><path d="M33.50 19.5V42.8"/><path d="M7.1 24.20H37.9"/><path d="M7.1 28.90H37.9"/><path d="M7.1 33.70H37.9"/><path d="M7.1 38.40H37.9"/></g><text x="8.6" y="18.7" font-size="3.2" font-weight="700" fill="#f4e0df" font-family="Liberation Sans">JUL</text><path d="M19.5 42.8C27 42.6 34 36.5 37.9 28.5V33.2C34.6 38.6 29 42.2 23 42.8z" fill="url(#curl)"/><path d="M23 42.8C29 42.2 34.6 38.6 37.9 33.2V42.8z" fill="#f7f7f7"/><rect x="9.00" y="8.2" width="1.5" height="6.2" rx=".75" fill="none" stroke="#3a3a3a" stroke-width=".75"/><rect x="9.10" y="12.6" width="1.3" height="1.6" rx=".5" fill="#2a2a2a"/><rect x="12.64" y="8.2" width="1.5" height="6.2" rx=".75" fill="none" stroke="#3a3a3a" stroke-width=".75"/><rect x="12.74" y="12.6" width="1.3" height="1.6" rx=".5" fill="#2a2a2a"/><rect x="16.28" y="8.2" width="1.5" height="6.2" rx=".75" fill="none" stroke="#3a3a3a" stroke-width=".75"/><rect x="16.38" y="12.6" width="1.3" height="1.6" rx=".5" fill="#2a2a2a"/><rect x="19.92" y="8.2" width="1.5" height="6.2" rx=".75" fill="none" stroke="#3a3a3a" stroke-width=".75"/><rect x="20.02" y="12.6" width="1.3" height="1.6" rx=".5" fill="#2a2a2a"/><rect x="23.56" y="8.2" width="1.5" height="6.2" rx=".75" fill="none" stroke="#3a3a3a" stroke-width=".75"/><rect x="23.66" y="12.6" width="1.3" height="1.6" rx=".5" fill="#2a2a2a"/><rect x="27.20" y="8.2" width="1.5" height="6.2" rx=".75" fill="none" stroke="#3a3a3a" stroke-width=".75"/><rect x="27.30" y="12.6" width="1.3" height="1.6" rx=".5" fill="#2a2a2a"/><rect x="30.84" y="8.2" width="1.5" height="6.2" rx=".75" fill="none" stroke="#3a3a3a" stroke-width=".75"/><rect x="30.94" y="12.6" width="1.3" height="1.6" rx=".5" fill="#2a2a2a"/><rect x="34.48" y="8.2" width="1.5" height="6.2" rx=".75" fill="none" stroke="#3a3a3a" stroke-width=".75"/><rect x="34.58" y="12.6" width="1.3" height="1.6" rx=".5" fill="#2a2a2a"/></svg>
<span class="t" style="left:496.20px;top:443.81px;font-size:17.79px;color:#7a3a12;font-weight:700;">Geburtstag steht an</span>
<span class="t" style="left:496.2px;top:469.92px;font-size:15.32px;color:#7c3f14"><span style="-webkit-text-stroke-width:0.42px">Marie Keßler</span> wird in <span style="-webkit-text-stroke-width:0.42px">7 Tagen</span> 35 Jahre alt.</span>
<div style="position:absolute;left:1400.00px;top:446.00px;width:142.70px;height:37.80px;border-radius:13px;background:rgba(255,253,245,.62);z-index:6"></div>
<svg style="left:1416.00px;top:455.00px;width:14.00px;height:18.00px;color:#7a3a12" viewBox="0 0 14 18" class="ic" stroke-width="0.8"><rect x="2.85" y="9" width="10.9" height="7.2" rx="2"/><path d="M2.9 12.8c.9.5 1.9.5 2.8-.2s1.9-.7 2.7 0 1.9.7 2.7 0 1.9-.7 2.7 0"/><path d="M4.8 7.2v1.6M8.3 7.2v1.6M11.8 7.2v1.6"/><path d="M4.80 2.7C5.30 3.6 5.85 4.3 5.70 4.9A1.05 1.05 0 0 1 3.90 4.9C3.75 4.3 4.30 3.6 4.80 2.7z"/><path d="M8.30 2.7C8.80 3.6 9.35 4.3 9.20 4.9A1.05 1.05 0 0 1 7.40 4.9C7.25 4.3 7.80 3.6 8.30 2.7z"/><path d="M11.80 2.7C12.30 3.6 12.85 4.3 12.70 4.9A1.05 1.05 0 0 1 10.90 4.9C10.75 4.3 11.30 3.6 11.80 2.7z"/></svg>
<span class="t" style="left:1440.40px;top:458.43px;font-size:13.33px;color:#7a3a12;-webkit-text-stroke-width:0.42px;letter-spacing:0.502px;">Alle anzeigen</span>
<div style="position:absolute;left:420.40px;top:530.00px;width:1147.40px;height:101.00px;box-sizing:border-box;border:1px solid #e1e6eb;border-radius:16px;background:linear-gradient(100deg,#fbfcfd 0%,#f1f6fb 45%,#e7f1f9 100%);z-index:3"></div>
<div style="position:absolute;left:441.00px;top:547.00px;width:40.00px;height:40.00px;border-radius:9px;background:#3f8bc7;z-index:6"></div>
<svg style="left:450.00px;top:559.20px;width:22.20px;height:16.00px;color:#fff" viewBox="0 0 22.2 16" class="ic" stroke-width="1.1"><circle cx="11.1" cy="3.9" r="3.2"/><path d="M5.6 15.6a5.5 5.5 0 0 1 11 0"/><path d="M5.9 2.4A2.8 2.8 0 0 0 5.9 8M16.3 2.4A2.8 2.8 0 0 1 16.3 8"/><path d="M0.7 15.6a4.8 4.8 0 0 1 3.3-4.6M21.5 15.6a4.8 4.8 0 0 0-3.3-4.6"/></svg>
<span class="t" style="left:495.70px;top:551.75px;font-size:14.90px;color:#2f78b4;-webkit-text-stroke-width:0.42px;letter-spacing:0.571px;">Willkommen im Team, Lina!</span>
<span class="t" style="left:495.70px;top:574.55px;font-size:14.89px;color:#374151;">Wir freuen uns, Lina Petersen als neue Auszubildende in unserem Team begrüßen zu dürfen! Lina unterstützt uns ab sofort in der Stadtbibliothek Bergstedt</span>
<span class="t" style="left:495.70px;top:596.15px;font-size:14.89px;color:#374151;">und in der Stadtteilbibliothek Johannisthal.</span>
<div style="position:absolute;left:420.40px;top:651.00px;width:1147.40px;height:470.00px;box-sizing:border-box;border:1px solid #e2e5ea;border-radius:22px;background:#fff;box-shadow:0 8px 24px rgba(30,40,60,.05);z-index:3"></div>
<div style="position:absolute;left:441.00px;top:670.00px;width:33.80px;height:33.80px;border-radius:9px;background:#e3eff8;z-index:6"></div>
<svg style="left:448.90px;top:677.90px;width:18.00px;height:18.00px;color:#3f8bc7" viewBox="0 0 24 24" class="ic" stroke-width="1.5"><rect x="5.5" y="4.2" width="13" height="16.8" rx="2"/><rect x="9" y="2.6" width="6" height="3.2" rx="1.1"/></svg>
<span class="t" style="left:485.70px;top:678.83px;font-size:16.74px;color:#111827;-webkit-text-stroke-width:0.42px;letter-spacing:0.714px;">Event-Anmeldungen</span>
<span class="t" style="left:441.10px;top:710.15px;font-size:14.30px;color:#6b7280;">Zusammenfassung deiner aktuellen Veranstaltungs-Anmeldungen mit den letzten Einträgen.</span>
<div style="position:absolute;left:441.10px;top:742.40px;width:220.40px;height:38.50px;box-sizing:border-box;border-radius:20px;border:1px solid #f0d88c;background:#fcf3ca;z-index:6"></div>
<svg style="left:456.80px;top:755.00px;width:13.80px;height:13.80px;color:#8a4a16" viewBox="0 0 24 24" class="ic" stroke-width="1.8"><circle cx="12" cy="12" r="10"/><path d="M12 6.5v5.5l3.5 2.2"/></svg>
<span class="t" style="left:481.20px;top:755.09px;font-size:13.22px;color:#8a4a16;-webkit-text-stroke-width:0.42px;letter-spacing:0.482px;">12 warten auf Bestätigung</span>
<div style="position:absolute;left:670.30px;top:742.40px;width:176.70px;height:38.50px;box-sizing:border-box;border-radius:20px;border:1px solid #c8cff5;background:#e1e6fb;z-index:6"></div>
<svg style="left:685.80px;top:755.00px;width:13.80px;height:13.80px;color:#3b3a9c" viewBox="0 0 24 24" class="ic" stroke-width="1.8"><circle cx="12" cy="12" r="10"/><path d="M4.9 4.9l14.2 14.2"/></svg>
<span class="t" style="left:709.50px;top:755.25px;font-size:12.90px;color:#3b3a9c;-webkit-text-stroke-width:0.42px;letter-spacing:0.505px;">1 Event ausgebucht</span>
<span class="t" style="left:441.10px;top:796.60px;font-size:12.40px;color:#6b7280;-webkit-text-stroke-width:0.42px;letter-spacing:0.907px;">NÄCHSTE TERMINE</span>
<div style="position:absolute;left:441.10px;top:818.50px;width:1105.60px;height:86.75px;box-sizing:border-box;border:1px solid #e3e6ea;border-radius:14px;background:#fff;z-index:4"></div>
<div style="position:absolute;left:456px;top:837.5px;width:48px;height:48px;border-radius:10px;overflow:hidden;z-index:6"><svg style="left:0;top:0;width:48px;height:48px" viewBox="0 0 48 48"><defs><linearGradient id="t1" x1="0" y1="0" x2="0" y2="1"><stop offset="0" stop-color="#3b3558"/><stop offset=".7" stop-color="#4a467a"/><stop offset="1" stop-color="#4c4a78"/></linearGradient><pattern id="dots" width="1.2" height="1.2" patternUnits="userSpaceOnUse"><circle cx=".6" cy=".6" r=".3" fill="#9fe0c8" opacity=".6"/></pattern></defs><rect width="48" height="48" fill="url(#t1)"/><g fill="#fff" opacity=".75"><circle cx="8" cy="4.3" r=".35"/><circle cx="15" cy="6.8" r=".35"/><circle cx="30" cy="7" r=".35"/><circle cx="38.5" cy="4.5" r=".35"/><circle cx="42.5" cy="12" r=".35"/><circle cx="3.5" cy="17" r=".35"/><circle cx="17.5" cy="10.8" r=".35"/><circle cx="43" cy="19.5" r=".35"/><circle cx="10" cy="34" r=".35"/><circle cx="44.5" cy="31" r=".35"/><circle cx="27" cy="28.5" r=".35"/></g><text x="23.8" y="4.4" font-size="6.2" font-weight="700" fill="#fff" text-anchor="middle" font-family="Liberation Sans" letter-spacing=".3">KINO</text><g transform="rotate(-4 24 22)"><path d="M9.5 16.5h9.3v12.3H9.8l.6-1.5-.8-1.2.7-1.3-.8-1.4.7-1.3-.8-1.4.7-1.2-.8-1.5z" fill="#f6f6f6"/><path d="M18.8 15.5h19.4l-.6 1.6.8 1.4-.7 1.3.8 1.4-.7 1.3.8 1.4-.7 1.3.7 1.5-.6 1.3H18.8z" fill="#3a9c88"/><text x="28.5" y="23.3" font-size="5" font-weight="700" fill="#eaf7f2" text-anchor="middle" font-family="Liberation Sans">08.09.25</text><text x="15.5" y="26" font-size="3.2" font-weight="700" fill="#2f8a78" font-family="Liberation Sans" transform="rotate(-90 15.5 26)">FREE</text></g><path d="M0 40.5c1.8-2.2 4.2-3.2 7-2.2 2-2.3 6-3.2 9.5-1.4 2.8.5 4.5 2.2 5.3 4.2 1.8-.3 3.5.2 4.5 1.5L26 48H0z" fill="#7cbf56"/><path d="M0 38.5c1.5-1.5 3.6-2 5.5-1.2l1 3.5L0 44z" fill="#5aa14a"/><path d="M0 44.5c4-2.2 9-2.5 13.5-1.2l2 4.7H0z" fill="#cfe07a"/><path d="M0 46c8-1.5 18-1.8 30-.6L48 44v4H0z" fill="#5aa64c"/><circle cx="34.9" cy="40.9" r="9.3" fill="#2f8f7a"/><circle cx="34.9" cy="40.9" r="9.3" fill="url(#dots)"/><path d="M32 47.5l2.5-6.5 2.8 6.5M34.5 41v6.5" stroke="#1a1a1a" stroke-width=".9" fill="none"/><rect x="28" y="33" width="8" height="5" fill="#1a1a1a"/><circle cx="35.5" cy="32.5" r="2.6" fill="#f3f3f3"/><circle cx="37.5" cy="36.5" r="2.2" fill="#f3f3f3"/><rect x="33" y="35.5" width="5" height="4.5" fill="#eee"/><path d="M40 48l8-4.5V48z" fill="#d9e27a"/></svg></div>
<div style="position:absolute;left:515.80px;top:829.30px;width:148.40px;height:18.30px;border-radius:6px;background:#e6eeed;z-index:6"></div>
<span class="t" style="left:523.20px;top:832.90px;font-size:11.19px;color:#2f8a68;-webkit-text-stroke-width:0.42px;letter-spacing:0.390px;">Stadtbibliothek Bergstedt</span>
<svg style="left:671.60px;top:832.30px;width:12.40px;height:12.40px;color:#6b7280" viewBox="0 0 24 24" class="ic" stroke-width="1.8"><circle cx="12" cy="12" r="10"/><path d="M12 6.5v5.5l3.5 2.2"/></svg>
<span class="t" style="left:688.50px;top:832.64px;font-size:11.72px;color:#6b7280;">13.04. · 15:00 Uhr</span>
<span class="t" style="left:516.20px;top:853.54px;font-size:13.92px;color:#1f2937;-webkit-text-stroke-width:0.42px;letter-spacing:0.487px;">Vorlesestunde für die Kleinen</span>
<div style="position:absolute;left:515.8px;top:881.1px;width:80.2px;height:6.2px;border-radius:4px;background:#e5e7eb;overflow:hidden;z-index:6"><div style="width:83.3%;height:100%;border-radius:4px;background:#e4b33b"></div></div>
<span class="t" style="left:602.60px;top:878.29px;font-size:12.22px;color:#6b7280;">10/12</span>
<div style="position:absolute;left:642.20px;top:875.60px;width:50.00px;height:18.10px;border-radius:5px;background:#fdf2c6;z-index:6"></div>
<span class="t" style="left:648.90px;top:879.09px;font-size:11.23px;color:#8a4a16;-webkit-text-stroke-width:0.42px;letter-spacing:0.428px;">2 offen</span>
<svg style="left:1507.50px;top:853.00px;width:17.00px;height:17.00px;color:#9aa3b4" viewBox="0 0 24 24" class="ic" stroke-width="1.5"><path d="M3 12h18M15 6l6 6-6 6"/></svg>
<div style="position:absolute;left:441.10px;top:913.25px;width:1105.60px;height:86.75px;box-sizing:border-box;border:1px solid #e3e6ea;border-radius:14px;background:#fff;z-index:4"></div>
<div style="position:absolute;left:456px;top:932.2px;width:48px;height:48px;border-radius:10px;overflow:hidden;z-index:6"><svg style="left:0;top:0;width:48px;height:48px" viewBox="0 0 48 48"><defs><linearGradient id="t2" x1="0" y1="0" x2="0" y2="1"><stop offset="0" stop-color="#cfe6f6"/><stop offset=".6" stop-color="#e3f1f8"/><stop offset="1" stop-color="#e9f3ea"/></linearGradient></defs><rect width="48" height="48" fill="url(#t2)"/><text x="3.5" y="5.7" font-size="4.6" font-weight="700" fill="#3f73ad" font-family="Liberation Sans" letter-spacing="-.1">VORLESEN &amp;</text><text x="3.5" y="10.4" font-size="4.6" font-weight="700" fill="#3f73ad" font-family="Liberation Sans">MALEN</text><path d="M23 13.5l15-1.5 10 .5V25l-10 2z" fill="#d65a48"/><path d="M22.6 13.2l10.5 3.2.3 1.6-10.8-3z" fill="#f0f0f0"/><ellipse cx="37.3" cy="3.3" rx="2.6" ry="2.4" fill="#f1c7a0"/><path d="M34.5 1.5c1-2 5-2.5 6.5.5l2 4-1.5.5-1-2.5c-1.2-1-3.5-1-4.8-.2z" fill="#8a4a2a"/><path d="M35.2 6.5l4.8.2 1.8 6.5-7.3.5z" fill="#4a86c8"/><path d="M34.2 13.5h3.2v3.5h-3.2z" fill="#4a86c8"/><rect x="6.2" y="16.7" width="33.5" height="15.4" rx=".6" fill="#4c86c6"/><g fill="#eaf2fb"><rect x="16" y="19.8" width="14.5" height="1.2"/><rect x="15" y="23.3" width="16.5" height="1.2"/><rect x="17" y="26.8" width="12.5" height="1.2"/><rect x="16.5" y="30.1" width="13" height="1.2"/></g><rect x="21" y="37.6" width="12.5" height="1.1" fill="#3f73ad"/><path d="M24 48c2-5 6-9 10-10 4 1 8 4 9 10z" fill="#d7e88a"/><path d="M0 27c2-2 5-3 7.5-1.5 3 .2 5.5 2.5 6 5.5 2.5 1 4 3.5 3.8 6.5 1.5 2.5 1.5 6.5-.3 10.5H0z" fill="#4f9a3a"/><path d="M0 31c2.5-1 5-.3 6.5 1.8 2.8.7 4.3 3.3 4 6-1.5 1.5-4 2-6.5 1.2-1.8 1.3-3 1-4 .2z" fill="#8cc63f"/><path d="M3.5 39c2.5-1 5.5-.5 7.5 1.2 2-.2 3.5 1 3.8 3-.5 2-2 3.5-4.5 4.8H4z" fill="#3f7f2e"/><path d="M48 26.5c-2.2-.8-5 .2-6.2 2.5-2.5.7-4 3-3.8 5.5-2.2 1.7-3 4.5-2.2 7.2-1 2.3-1 4.8.2 6.3H48z" fill="#4a9438"/><path d="M48 31c-2.5 0-4.5 1.5-5 3.8-1.8 1.5-2 4-1 5.8 2 .7 4.3.2 6-1z" fill="#8cc63f"/></svg></div>
<div style="position:absolute;left:515.80px;top:924.05px;width:148.40px;height:18.30px;border-radius:6px;background:#e6eeed;z-index:6"></div>
<span class="t" style="left:523.20px;top:927.65px;font-size:11.19px;color:#2f8a68;-webkit-text-stroke-width:0.42px;letter-spacing:0.390px;">Stadtbibliothek Bergstedt</span>
<svg style="left:671.60px;top:927.05px;width:12.40px;height:12.40px;color:#6b7280" viewBox="0 0 24 24" class="ic" stroke-width="1.8"><circle cx="12" cy="12" r="10"/><path d="M12 6.5v5.5l3.5 2.2"/></svg>
<span class="t" style="left:688.50px;top:927.39px;font-size:11.72px;color:#6b7280;">15.04. · 19:00 Uhr</span>
<span class="t" style="left:516.20px;top:948.29px;font-size:13.92px;color:#1f2937;-webkit-text-stroke-width:0.42px;letter-spacing:0.487px;">Digitale Sprechstunde</span>
<div style="position:absolute;left:515.8px;top:975.9px;width:80.2px;height:6.2px;border-radius:4px;background:#e5e7eb;overflow:hidden;z-index:6"><div style="width:62.5%;height:100%;border-radius:4px;background:#4dbb69"></div></div>
<span class="t" style="left:602.60px;top:973.04px;font-size:12.22px;color:#6b7280;">5/8</span>
<div style="position:absolute;left:627.90px;top:970.35px;width:50.70px;height:18.10px;border-radius:5px;background:#fdf2c6;z-index:6"></div>
<span class="t" style="left:634.60px;top:973.84px;font-size:11.23px;color:#8a4a16;-webkit-text-stroke-width:0.42px;letter-spacing:0.428px;">1 offen</span>
<svg style="left:1507.50px;top:947.75px;width:17.00px;height:17.00px;color:#9aa3b4" viewBox="0 0 24 24" class="ic" stroke-width="1.5"><path d="M3 12h18M15 6l6 6-6 6"/></svg>
<div style="position:absolute;left:441.10px;top:1008.00px;width:1105.60px;height:86.75px;box-sizing:border-box;border:1px solid #e3e6ea;border-radius:14px;background:#fff;z-index:4"></div>
<div style="position:absolute;left:456px;top:1027.0px;width:48px;height:48px;border-radius:10px;overflow:hidden;z-index:6"><svg style="left:0;top:0;width:48px;height:48px" viewBox="0 0 48 48"><rect width="48" height="48" fill="#3d59a6"/><path d="M0 0h48v21.5C40 13 32 10.5 24.2 10.5S8 13 0 20.5z" fill="#6fb0d8"/><path d="M0 20.5C8 13 16.5 10.5 24.2 10.5S40 13 48 21.5v2C40 15 32 12.3 24.2 12.3S8 15 0 22.3z" fill="#ffffff"/><circle cx="5.5" cy="7.4" r="2.2" fill="#8fc445"/><path d="M13.5 5.5l5.5-2.5 1.5 4.5-2 3-3.5-.5z" fill="#4f5fb0"/><path d="M12.5 9.5l3.5.8-1.5 2.5-4 .3z" fill="#f2d5c4"/><path d="M17 3l2-2.5 1.5 1.5-1.5 3z" fill="#8c7fd0"/><path d="M26 1.5l3 .5-.5 3-3-.2z" fill="#8a6fc8"/><path d="M27 4.5l2.5 1.5-1 2z" fill="#e58a50"/><circle cx="42.5" cy="1.8" r=".6" fill="#f4e37a"/><circle cx="35" cy="7.5" r=".4" fill="#f4e37a"/><circle cx="39.8" cy="3.7" r="1.9" fill="#f1c4a0"/><path d="M38 2.5c.3-1.8 3-2.3 3.9-.4l-.5 1.2-2.6-.4z" fill="#7a3e1e"/><path d="M37.8 5.8h4.5l.8 4h-5.5z" fill="#d9534a"/><path d="M34.5 10.5h10l.8 4.5c-2.5 1.7-7 2-10.8.2z" fill="#e8925a"/><rect x="40.5" y="11.5" width="2.6" height="2" fill="#3f8a70"/><path d="M39.5 16l2 4.5 1-4z" fill="#7a3552"/><text x="24.5" y="17.4" font-size="4.3" font-weight="700" fill="#fff" text-anchor="middle" font-family="Liberation Sans">Vorlesen &amp;</text><text x="24.2" y="22.6" font-size="4.3" font-weight="700" fill="#fff" text-anchor="middle" font-family="Liberation Sans">Basteln</text><rect x="8.6" y="24.2" width="33" height="10" fill="#e8925a"/><text x="25" y="28.6" font-size="3.6" font-weight="700" fill="#fdf1e6" text-anchor="middle" font-family="Liberation Sans">19.01. / 09.02. /</text><text x="25.5" y="32.9" font-size="3.6" font-weight="700" fill="#fdf1e6" text-anchor="middle" font-family="Liberation Sans">16.03. / 20.04.</text><rect x="20" y="37.8" width="9" height=".8" fill="#b9c6ea"/><rect x="21.5" y="41.3" width="6" height=".8" fill="#e6b88f"/></svg></div>
<div style="position:absolute;left:515.80px;top:1018.80px;width:148.40px;height:18.30px;border-radius:6px;background:#e6eeed;z-index:6"></div>
<span class="t" style="left:523.20px;top:1022.40px;font-size:11.19px;color:#2f8a68;-webkit-text-stroke-width:0.42px;letter-spacing:0.390px;">Stadtbibliothek Bergstedt</span>
<svg style="left:671.60px;top:1021.80px;width:12.40px;height:12.40px;color:#6b7280" viewBox="0 0 24 24" class="ic" stroke-width="1.8"><circle cx="12" cy="12" r="10"/><path d="M12 6.5v5.5l3.5 2.2"/></svg>
<span class="t" style="left:688.50px;top:1022.14px;font-size:11.72px;color:#6b7280;">18.04. · 15:00 Uhr</span>
<span class="t" style="left:516.20px;top:1043.04px;font-size:13.92px;color:#1f2937;-webkit-text-stroke-width:0.42px;letter-spacing:0.487px;">Gaming-Nachmittag</span>
<div style="position:absolute;left:515.8px;top:1070.6px;width:80.2px;height:6.2px;border-radius:4px;background:#e5e7eb;overflow:hidden;z-index:6"><div style="width:100.0%;height:100%;border-radius:4px;background:#e04b4b"></div></div>
<span class="t" style="left:602.60px;top:1067.79px;font-size:12.22px;color:#6b7280;">12/12</span>
<div style="position:absolute;left:642.20px;top:1065.10px;width:50.00px;height:18.10px;border-radius:5px;background:#fdf2c6;z-index:6"></div>
<span class="t" style="left:648.90px;top:1068.59px;font-size:11.23px;color:#8a4a16;-webkit-text-stroke-width:0.42px;letter-spacing:0.428px;">3 offen</span>
<svg style="left:1507.50px;top:1042.50px;width:17.00px;height:17.00px;color:#9aa3b4" viewBox="0 0 24 24" class="ic" stroke-width="1.5"><path d="M3 12h18M15 6l6 6-6 6"/></svg>
</div>
</body>
</html>
